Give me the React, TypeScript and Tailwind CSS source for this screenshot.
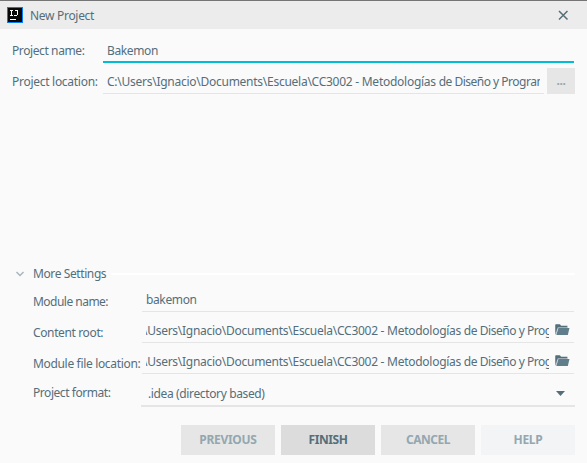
import React from 'react';

function FolderIcon() {
  return (
    <svg className="ml-[6px] mt-[11px] h-[14px] w-[15px] shrink-0" viewBox="0 0 15 14">
      <path d="M0 2.2Q0 1 1.2 1h3.6l1.5 1.4h5.5q1 0 1 1v1.4H3L1.2 11 0 11.5Z" fill="#a0b0b8" />
      <path d="M.5 10V2.2q0-.7.7-.7h3.4l1.5 1.4h5.8v1.4H2.7Z" fill="#546e7a" />
      <path d="M3.4 5H14.5L12.8 12H1.3Z" fill="#607d8b" />
    </svg>
  );
}

function PathField() {
  return (
    <div className="flex h-[31px] w-[432px] border-b border-[#e5e5e5]">
      <div className="ml-1 mt-[9px] h-5 w-[403px] overflow-hidden leading-5 tracking-[-0.27px]">
        <span className="-ml-[3px]">\Users\Ignacio\Documents\Escuela\CC3002 - Metodologías <span className="tracking-[-0.46px]">de Diseño y Prog</span></span>
      </div>
      <FolderIcon />
    </div>
  );
}

function Label({ children, className }: { children: React.ReactNode; className: string }) {
  return <label className={`shrink-0 leading-5 ${className}`}>{children}</label>;
}

export default function App() {
  return (
    <main className="h-[463px] w-[587px] overflow-hidden whitespace-nowrap bg-[#fafafa] font-['Noto_Sans',sans-serif] text-[12px] tracking-[-0.37px] text-[#546e7a]">
      <header className="flex h-[29px] border-t border-[#757575] bg-[#ececec]">
        <svg className="ml-[7px] mt-[6px] h-4 w-4" viewBox="0 0 16 16" shapeRendering="crispEdges">
          <path fill="#087cfa" d="M0 0h16v16H0z" />
          <path fill="#080808" d="M1 1h14v14H1z" />
          <path fill="#fff" d="M3 3h3v1H3zM4 4h1v4H4zM3 8h3v1H3zM8 3h3v1H8zM10 4h1v4h-1zM7 8h3v1H7zM3 12h6v1H3z" />
        </svg>
        <h1 className="ml-[7px] mt-[5px] leading-5 tracking-[-0.3px]">New Project</h1>
        <button className="ml-auto mr-[18px] mt-[8px] h-[12px] w-[12px]" aria-label="Close">
          <svg viewBox="0 0 12 12"><path d="m2 2 8.5 8.5m0-8.5L2 10.5" stroke="#546e7a" strokeWidth="1.5" /></svg>
        </button>
      </header>

      <section className="h-[231px] pl-3">
        <div className="flex h-[34px]">
          <Label className="mt-[12px] w-[91px] tracking-[-0.4px]">Project name:</Label>
          <div className="w-[471px] border-b-2 border-[#00bcd4] pl-1 pt-[12px] leading-5">Bakemon</div>
        </div>
        <div className="flex h-[31px]">
          <Label className="mt-[9px] w-[91px] tracking-[-0.28px]">Project location:</Label>
          <div className="w-[441px] border-b border-[#e5e5e5] pl-1 pt-[9px]">
            <div className="h-5 w-[433px] overflow-hidden leading-5 tracking-[-0.26px]">C:\Users\Ignacio\Documents\Escuela\CC3002 - Metodologías <span className="tracking-[-0.5px]">de Diseño y Program</span></div>
          </div>
          <button className="ml-[3px] mt-[5px] h-[26px] w-7 bg-[#e6e6e6] font-bold leading-[26px] text-[#94a7b0]">...</button>
        </div>
      </section>

      <section>
        <div className="flex h-[27px] items-center pl-[15px]">
          <svg className="h-[10px] w-[10px]" viewBox="0 0 10 10"><path d="m1.5 3 3.5 3.5L8.5 3" fill="none" stroke="#a7b6bd" strokeWidth="1.5" /></svg>
          <h2 className="ml-2 leading-5 tracking-[-0.4px]">More Settings</h2>
          <div className="ml-auto mr-3 mt-[1px] h-[2px] w-[464px] bg-white" />
        </div>
        <div className="flex h-[25px] pl-[33px]">
          <Label className="mt-[5px] w-[109px] tracking-[-0.52px]">Module name:</Label>
          <div className="w-[432px] border-b border-[#e5e5e5] pl-1 pt-[3px] leading-5">bakemon</div>
        </div>
        <div className="flex h-[31px] pl-[33px]">
          <Label className="mt-[11px] w-[109px]">Content root:</Label>
          <PathField />
        </div>
        <div className="flex h-[31px] pl-[33px]">
          <Label className="mt-[11px] w-[109px] tracking-[-0.33px]">Module file location:</Label>
          <PathField />
        </div>
        <div className="flex h-[33px] pl-[33px]">
          <Label className="mt-[9px] w-[108px] tracking-[-0.45px]">Project format:</Label>
          <div className="flex w-[434px] border-b-2 border-[#e5e5e5] pl-[7px] pt-[10px] leading-5">
            <span>.idea (directory based)</span>
            <svg className="ml-auto mr-[10px] mt-[7px] h-[5px] w-[9px]" viewBox="0 0 9 5"><path d="M0 0h9L4.5 5Z" fill="#546e7a" /></svg>
          </div>
        </div>
      </section>

      <footer className="mt-[18px] flex justify-end gap-[6px] pr-3 font-bold tracking-[-0.3px]">
        <button className="h-[30px] w-[94px] bg-[#e6e6e6] text-[#94a7b0]">PREVIOUS</button>
        <button className="h-[30px] w-[94px] bg-[#dcdcdc] tracking-[-0.45px]">FINISH</button>
        <button className="h-[30px] w-[94px] bg-[#e6e6e6] text-[#94a7b0] tracking-[-0.45px]">CANCEL</button>
        <button className="h-[30px] w-[94px] bg-[#f2f4f5] text-[#94a7b0]">HELP</button>
      </footer>
    </main>
  );
}
